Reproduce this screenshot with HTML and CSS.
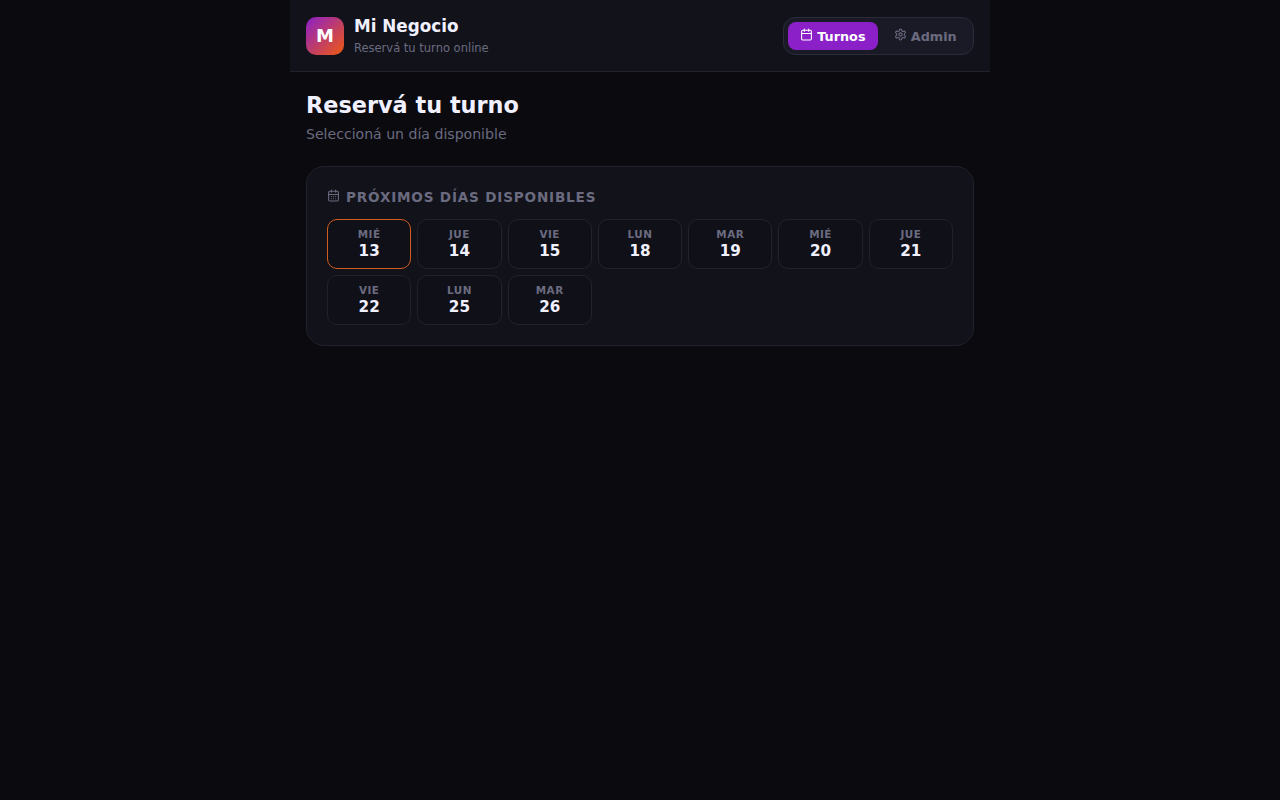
FILE: index.html
```html
<!DOCTYPE html>
<html lang="es">
<head>
<meta charset="utf-8">
<title>Mi Negocio</title>
<link rel="stylesheet" href="styles.css">
</head>
<body>
<div class="app">
  <header class="header">
    <div class="brand">
      <div class="logo">M</div>
      <div class="brand-text">
        <div class="brand-name">Mi Negocio</div>
        <div class="brand-sub">Reservá tu turno online</div>
      </div>
    </div>
    <nav class="tabs">
      <button class="tab tab-active">
        <svg class="tab-icon" viewBox="0 0 24 24" fill="none" stroke="currentColor" stroke-width="2" stroke-linecap="round" stroke-linejoin="round"><path d="M8 2v4"/><path d="M16 2v4"/><rect x="3" y="4" width="18" height="18" rx="2"/><path d="M3 10h18"/></svg>
        Turnos
      </button>
      <button class="tab">
        <svg class="tab-icon" viewBox="0 0 24 24" fill="none" stroke="currentColor" stroke-width="2" stroke-linecap="round" stroke-linejoin="round"><path d="M12.22 2h-.44a2 2 0 0 0-2 2v.18a2 2 0 0 1-1 1.73l-.43.25a2 2 0 0 1-2 0l-.15-.08a2 2 0 0 0-2.73.73l-.22.38a2 2 0 0 0 .73 2.73l.15.1a2 2 0 0 1 1 1.72v.51a2 2 0 0 1-1 1.74l-.15.09a2 2 0 0 0-.73 2.73l.22.38a2 2 0 0 0 2.73.73l.15-.08a2 2 0 0 1 2 0l.43.25a2 2 0 0 1 1 1.73V20a2 2 0 0 0 2 2h.44a2 2 0 0 0 2-2v-.18a2 2 0 0 1 1-1.73l.43-.25a2 2 0 0 1 2 0l.15.08a2 2 0 0 0 2.73-.73l.22-.39a2 2 0 0 0-.73-2.73l-.15-.08a2 2 0 0 1-1-1.74v-.5a2 2 0 0 1 1-1.74l.15-.09a2 2 0 0 0 .73-2.73l-.22-.38a2 2 0 0 0-2.73-.73l-.15.08a2 2 0 0 1-2 0l-.43-.25a2 2 0 0 1-1-1.73V4a2 2 0 0 0-2-2z"/><circle cx="12" cy="12" r="3"/></svg>
        Admin
      </button>
    </nav>
  </header>
  <main class="main">
    <h1 class="title">Reservá tu turno</h1>
    <p class="subtitle">Seleccioná un día disponible</p>
    <section class="card">
      <h2 class="card-title">
        <svg class="card-icon" viewBox="0 0 24 24" fill="none" stroke="currentColor" stroke-width="2" stroke-linecap="round" stroke-linejoin="round"><path d="M8 2v4"/><path d="M16 2v4"/><rect x="3" y="4" width="18" height="18" rx="2"/><path d="M3 10h18"/><path d="M8 14h.01"/><path d="M12 14h.01"/><path d="M16 14h.01"/><path d="M8 18h.01"/><path d="M12 18h.01"/><path d="M16 18h.01"/></svg>
        PRÓXIMOS DÍAS DISPONIBLES
      </h2>
      <div class="days">
        <button class="day day-selected"><span class="dow">MIÉ</span><span class="num">13</span></button>
        <button class="day"><span class="dow">JUE</span><span class="num">14</span></button>
        <button class="day"><span class="dow">VIE</span><span class="num">15</span></button>
        <button class="day"><span class="dow">LUN</span><span class="num">18</span></button>
        <button class="day"><span class="dow">MAR</span><span class="num">19</span></button>
        <button class="day"><span class="dow">MIÉ</span><span class="num">20</span></button>
        <button class="day"><span class="dow">JUE</span><span class="num">21</span></button>
        <button class="day"><span class="dow">VIE</span><span class="num">22</span></button>
        <button class="day"><span class="dow">LUN</span><span class="num">25</span></button>
        <button class="day"><span class="dow">MAR</span><span class="num">26</span></button>
      </div>
    </section>
  </main>
</div>
</body>
</html>
```
FILE: styles.css
```css
* { box-sizing: border-box; }
html, body { margin: 0; padding: 0; }
body {
  background: #0a0a0f;
  color: #f0f0ff;
  font-family: "DejaVu Sans", sans-serif;
  min-height: 800px;
}
.app { width: 700px; margin: 0 auto; }
.header {
  height: 72px;
  background: #12121a;
  border-bottom: 1px solid #22222e;
  padding: 0 16px;
  display: flex;
  align-items: center;
  justify-content: space-between;
}
.brand { display: flex; align-items: center; gap: 10px; }
.logo {
  width: 38px;
  height: 38px;
  border-radius: 10px;
  background: linear-gradient(135deg, #8b1fc8, #f05a10);
  color: #fff;
  font-size: 18px;
  font-weight: 700;
  display: flex;
  align-items: center;
  justify-content: center;
}
.brand-name { font-size: 16.8px; font-weight: 700; line-height: 20px; color: #f0f0ff; }
.brand-sub { font-size: 11.5px; line-height: 14px; margin-top: 5px; color: #6b6b80; }
.tabs {
  display: flex;
  gap: 4px;
  height: 38px;
  padding: 4px;
  background: #1a1a26;
  border: 1px solid #2a2a3a;
  border-radius: 12px;
}
.tab {
  height: 28px;
  padding: 2px 12.3px 0 12px;
  border: 0;
  border-radius: 8px;
  background: transparent;
  color: #6b6b80;
  font: 700 12.8px "DejaVu Sans", sans-serif;
  display: flex;
  align-items: center;
  justify-content: center;
  gap: 4px;
}
.tab-active { background: #8b1fc8; color: #fff; }
.tab-icon { width: 13px; height: 13px; margin-top: -4px; flex: none; }
.main { padding: 20px 16px; }
.title { margin: 0; font-size: 22.4px; line-height: 26px; font-weight: 700; color: #f0f0ff; }
.subtitle { margin: 8px 0 0; font-size: 14.08px; line-height: 17px; color: #6b6b80; }
.card {
  margin-top: 23px;
  height: 180px;
  padding: 20px;
  background: #12121a;
  border: 1px solid #22222e;
  border-radius: 18px;
}
.card-title {
  margin: 0 0 12px;
  height: 20px;
  display: flex;
  align-items: center;
  gap: 6px;
  font-size: 13.6px;
  font-weight: 700;
  letter-spacing: 0.8px;
  color: #6b6b80;
}
.card-icon { width: 13px; height: 13px; margin-top: -3px; flex: none; }
.days { display: grid; grid-template-columns: repeat(7, 1fr); gap: 6px; }
.day {
  height: 50px;
  padding: 2px 0 0;
  background: #101018;
  border: 1px solid #22222e;
  border-radius: 10px;
  display: flex;
  flex-direction: column;
  align-items: center;
  justify-content: center;
  font-family: "DejaVu Sans", sans-serif;
}
.day-selected { border-color: #cf5c20; }
.dow { font-size: 10.4px; line-height: 12px; font-weight: 700; letter-spacing: 0.5px; color: #6b6b80; margin-top: -1px; }
.num { font-size: 15.2px; line-height: 20px; font-weight: 700; color: #f0f0ff; margin-top: 1px; }
```
